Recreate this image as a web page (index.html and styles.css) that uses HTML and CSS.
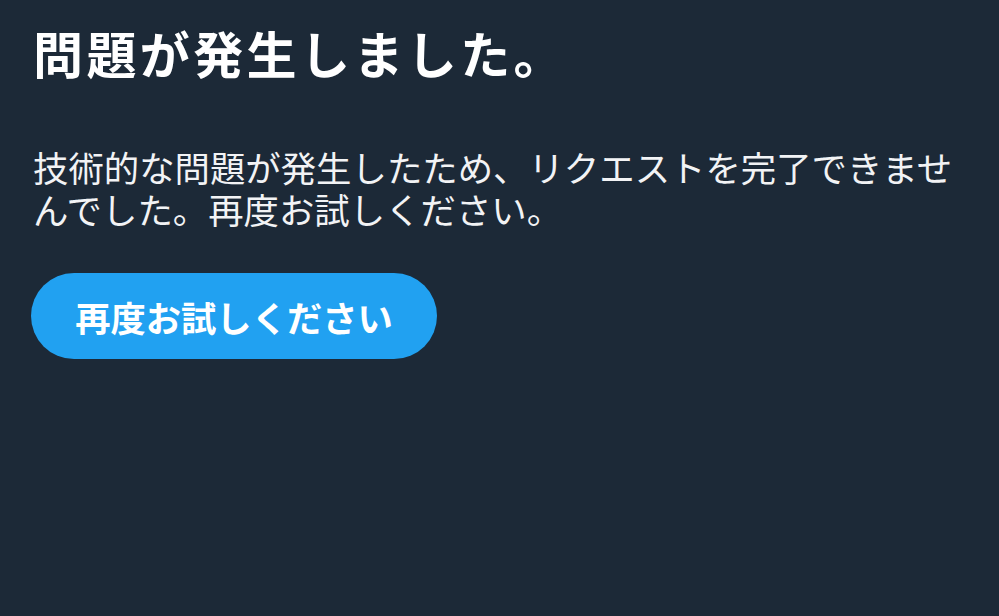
FILE: index.html
```html
<!DOCTYPE html>
<html lang="ja">
<head>
<meta charset="utf-8">
<link rel="stylesheet" href="styles.css">
</head>
<body>
<main class="page">
  <h1 class="title">問題が発生しました。</h1>
  <p class="message">技術的な問題が発生したため、リクエストを完了できませんでした。再度お試しください。</p>
  <button class="retry" type="button">再度お試しください</button>
</main>
</body>
</html>
```

FILE: styles.css
```css
html, body {
  margin: 0;
  padding: 0;
  background: #1c2937;
  height: 100%;
}
.page {
  padding: 24px 33px 0 33px;
  font-family: "Noto Sans CJK JP", "Noto Sans", sans-serif;
  color: #ffffff;
  display: flex;
  flex-direction: column;
  align-items: flex-start;
}
.title {
  margin: 0;
  font-size: 50px;
  line-height: 56px;
  font-weight: 700;
  letter-spacing: 3.4px;
}
.message {
  margin: 66px 0 0 0;
  font-size: 35.4px;
  line-height: 42px;
  font-weight: 400;
  color: #f2f3f5;
  width: 933px;
}
.retry {
  margin-top: 43px;
  margin-left: -2px;
  width: 406px;
  height: 86px;
  border: none;
  border-radius: 43px;
  background: #21a1f1;
  color: #ffffff;
  font-family: "Noto Sans CJK JP", "Noto Sans", sans-serif;
  font-size: 35.3px;
  font-weight: 700;
  padding: 0;
  display: flex;
  align-items: center;
  justify-content: center;
}
```
